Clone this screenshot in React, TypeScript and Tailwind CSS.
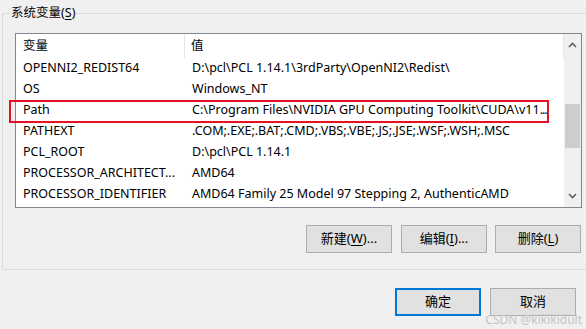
import React from "react";

const rows: [string, React.ReactNode][] = [
  ["OPENNI2_REDIST64", "D:\\pcl\\PCL 1.14.1\\3rdParty\\OpenNI2\\Redist\\"],
  ["OS", "Windows_NT"],
  [
    "Path",
    <>
      C:\Program Files\NVIDIA GPU Computing Toolkit\CUDA\v11<span className="tracking-[-1px]">...</span>
    </>,
  ],
  ["PATHEXT", ".COM;.EXE;.BAT;.CMD;.VBS;.VBE;.JS;.JSE;.WSF;.WSH;.MSC"],
  ["PCL_ROOT", "D:\\pcl\\PCL 1.14.1"],
  ["PROCESSOR_ARCHITECT...", "AMD64"],
  ["PROCESSOR_IDENTIFIER", "AMD64 Family 25 Model 97 Stepping 2, AuthenticAMD"],
];

function Btn({ children, primary }: { children: React.ReactNode; primary?: boolean }) {
  return (
    <div
      className={
        "w-[86px] h-[28px] flex items-center justify-center bg-[#e1e1e1] text-[13px] text-black " +
        (primary ? "border-2 border-[#0078d7]" : "border border-[#adadad]")
      }
    >
      {children}
    </div>
  );
}

export default function App() {
  return (
    <div
      className="w-[586px] h-[329px] bg-[#f0f0f0] overflow-hidden relative text-black"
      style={{ fontFamily: '"Noto Sans", "Noto Sans CJK SC", sans-serif' }}
    >
      <div className="pt-[13px] pl-[2px]">
        <div className="relative w-[620px] h-[257px] border border-[#dcdcdc]">
          <div className="absolute left-[7px] top-[-10px] bg-[#f0f0f0] px-[1px] text-[12.5px] leading-[18px]">
            系统变量(<span className="underline underline-offset-2">S</span>)
          </div>
          <div className="ml-[12px] mt-[19px] w-[567px] h-[175px] border border-[#828790] bg-white flex overflow-hidden">
            <div className="flex-1 min-w-0 flex flex-col text-[12.5px] overflow-hidden">
              <div className="h-[24px] flex items-center">
                <div className="w-[169px] shrink-0 h-full pl-[7px] flex items-center border-r border-[#e5e5e5]">变量</div>
                <div className="flex-1 h-full pl-[6px] flex items-center border-r border-[#e5e5e5]">值</div>
              </div>
              {rows.map(([k, v]) => (
                <div key={k} className="h-[21px] flex items-center whitespace-nowrap">
                  <div className="w-[169px] shrink-0 pl-[7px] overflow-hidden">{k}</div>
                  <div className="flex-1 min-w-0 pl-[7px] overflow-hidden">{v}</div>
                </div>
              ))}
            </div>
            <div className="w-[17px] shrink-0 h-full bg-[#f0f0f0] flex flex-col items-center">
              <div className="h-[20px] w-full flex items-center justify-center mt-[1px]">
                <svg width="9" height="6" viewBox="0 0 9 6">
                  <path d="M1 5 L4.5 1.5 L8 5" stroke="#606060" strokeWidth="1.6" fill="none" />
                </svg>
              </div>
              <div className="mt-[49px] w-[15px] h-[44px] bg-[#cdcdcd]" />
              <div className="flex-1" />
              <div className="h-[20px] w-full flex items-center justify-center mb-[1px]">
                <svg width="9" height="6" viewBox="0 0 9 6">
                  <path d="M1 1 L4.5 4.5 L8 1" stroke="#606060" strokeWidth="1.6" fill="none" />
                </svg>
              </div>
            </div>
          </div>
          <div className="flex ml-[303px] mt-[17px] gap-[8px]">
            <Btn>
              新建(<span className="underline underline-offset-2">W</span>)...
            </Btn>
            <div className="ml-[1px]">
              <Btn>
                编辑(<span className="underline underline-offset-2">I</span>)...
              </Btn>
            </div>
            <div className="w-[87px]">
              <Btn>
                删除(<span className="underline underline-offset-2">L</span>)
              </Btn>
            </div>
          </div>
          <div className="absolute left-[6px] top-[86px] w-[540px] h-[23px] border-2 border-[#e81123]" />
        </div>
      </div>
      <div className="flex pl-[395px] mt-[18px] gap-[9px]">
        <Btn primary>确定</Btn>
        <Btn>取消</Btn>
      </div>
      <div className="absolute right-[4px] bottom-[2px] text-[12px] leading-[14px] text-[#c4c4c4]">
        CSDN @kikikidult
      </div>
    </div>
  );
}
